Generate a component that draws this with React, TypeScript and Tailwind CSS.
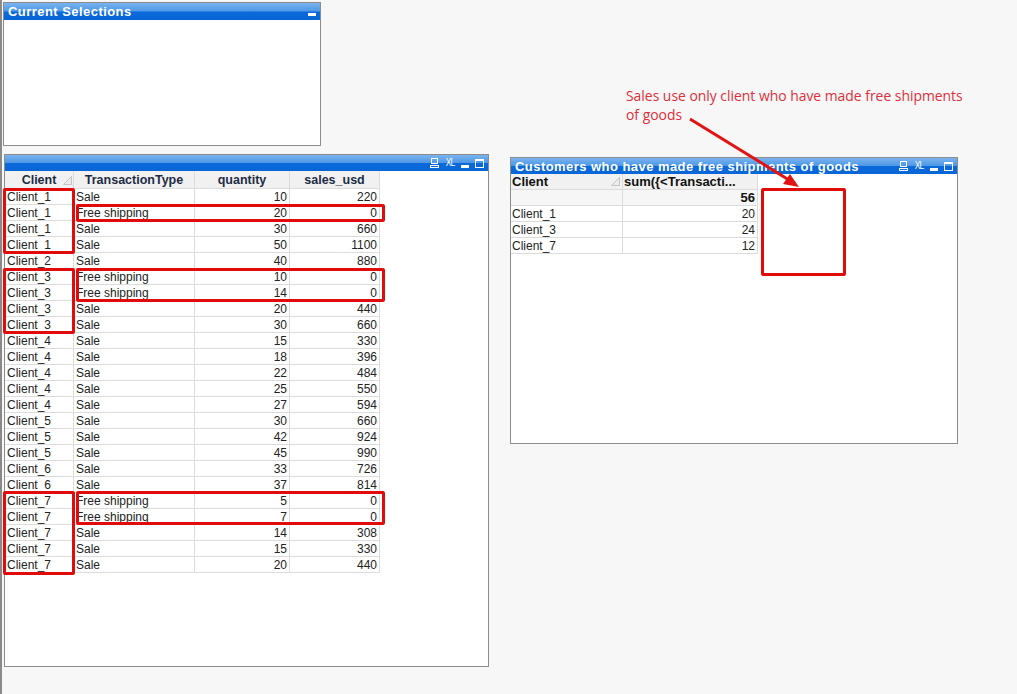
import React from 'react';

type Row = [string, string, number, number];

const salesRows: Row[] = [
  ['Client_1', 'Sale', 10, 220],
  ['Client_1', 'Free shipping', 20, 0],
  ['Client_1', 'Sale', 30, 660],
  ['Client_1', 'Sale', 50, 1100],
  ['Client_2', 'Sale', 40, 880],
  ['Client_3', 'Free shipping', 10, 0],
  ['Client_3', 'Free shipping', 14, 0],
  ['Client_3', 'Sale', 20, 440],
  ['Client_3', 'Sale', 30, 660],
  ['Client_4', 'Sale', 15, 330],
  ['Client_4', 'Sale', 18, 396],
  ['Client_4', 'Sale', 22, 484],
  ['Client_4', 'Sale', 25, 550],
  ['Client_4', 'Sale', 27, 594],
  ['Client_5', 'Sale', 30, 660],
  ['Client_5', 'Sale', 42, 924],
  ['Client_5', 'Sale', 45, 990],
  ['Client_6', 'Sale', 33, 726],
  ['Client_6', 'Sale', 37, 814],
  ['Client_7', 'Free shipping', 5, 0],
  ['Client_7', 'Free shipping', 7, 0],
  ['Client_7', 'Sale', 14, 308],
  ['Client_7', 'Sale', 15, 330],
  ['Client_7', 'Sale', 20, 440],
];

const freeShipping: [string, number][] = [
  ['Client_1', 20],
  ['Client_3', 24],
  ['Client_7', 12],
];

const font = { fontFamily: '"Liberation Sans", Arial, sans-serif' };

// glossy blue caption bar
const captionBg =
  'bg-[linear-gradient(#7ab4ef_0%,#4f98e6_48%,#0b69d9_52%,#0a66d6_100%)]';

function SortMark() {
  return (
    <svg width="9" height="9" viewBox="0 0 9 9" className="shrink-0">
      <polygon points="0.5,8.5 8.5,8.5 8.5,0.5" fill="#ececec" stroke="#c4c4c4" strokeWidth="1" />
    </svg>
  );
}

function CaptionIcons({ full }: { full: boolean }) {
  return (
    <div className="flex items-center gap-[6px] pr-[4px]">
      {full && (
        <>
          <svg width="9" height="10" viewBox="0 0 9 10">
            <rect x="1.5" y="0.5" width="6" height="5" fill="none" stroke="#fff" strokeWidth="1" />
            <rect x="0" y="7" width="9" height="1" fill="#fff" />
            <rect x="0" y="9" width="9" height="1" fill="#fff" />
            <rect x="0" y="7" width="1" height="3" fill="#fff" />
            <rect x="8" y="7" width="1" height="3" fill="#fff" />
          </svg>
          <span className="text-[10px] leading-none text-white tracking-[-1px] scale-x-[0.85]">XL</span>
        </>
      )}
      <div className="w-[8px] h-[3px] bg-white mt-[6px]" />
      {full && (
        <div className="w-[9px] h-[9px] border border-white border-t-[2px]" />
      )}
    </div>
  );
}

function Caption({ title, full, h }: { title?: string; full: boolean; h: string }) {
  return (
    <div className={`${h} ${captionBg} flex items-center justify-between shrink-0`}>
      <span className="pl-[4px] text-white text-[13px] font-bold leading-none whitespace-nowrap tracking-[0.45px]">
        {title}
      </span>
      <CaptionIcons full={full} />
    </div>
  );
}

function RedBox({ className }: { className: string }) {
  return <div className={`absolute border-[3px] border-[#e10b0b] rounded-[2px] ${className}`} />;
}

export default function App() {
  return (
    <div
      className="relative w-[1017px] h-[694px] bg-[#f7f7f7] overflow-hidden border-l-2 border-[#8a8a8a] text-[#222]"
      style={font}
    >
      {/* Current Selections */}
      <div className="absolute left-[1px] top-[2px] w-[318px] h-[144px] bg-white border border-[#8c8c8c] flex flex-col">
        <Caption title="Current Selections" full={false} h="h-[17px]" />
      </div>

      {/* Main straight table */}
      <div className="absolute left-[2px] top-[154px] w-[485px] h-[513px] bg-white border border-[#8c8c8c] flex flex-col">
        <Caption full h="h-[16px]" />
        <div className="grid grid-cols-[69px_121px_95px_90px] w-[375px] text-[12px] leading-[16px]">
          <div className="h-[18px] bg-[#f1f1f1] border-r border-b border-[#dcdcdc] flex items-center justify-center relative font-bold text-[12.5px] text-[#1d2c45]">
            Client
            <div className="absolute right-[1px] top-[5px]">
              <SortMark />
            </div>
          </div>
          <div className="h-[18px] bg-[#f1f1f1] border-r border-b border-[#dcdcdc] flex items-center justify-center font-bold text-[12.5px] text-[#1d2c45]">
            TransactionType
          </div>
          <div className="h-[18px] bg-[#f1f1f1] border-r border-b border-[#dcdcdc] flex items-center justify-center font-bold text-[12.5px] text-[#1d2c45]">
            quantity
          </div>
          <div className="h-[18px] bg-[#f1f1f1] border-r border-b border-[#dcdcdc] flex items-center justify-center font-bold text-[12.5px] text-[#1d2c45]">
            sales_usd
          </div>
          {salesRows.map((r, i) => (
            <React.Fragment key={i}>
              <div className="h-[16px] px-[2px] border-r border-b border-[#dcdcdc] whitespace-nowrap">{r[0]}</div>
              <div className="h-[16px] px-[2px] border-r border-b border-[#dcdcdc] whitespace-nowrap">{r[1]}</div>
              <div className="h-[16px] px-[2px] border-r border-b border-[#dcdcdc] text-right">{r[2]}</div>
              <div className="h-[16px] px-[2px] border-r border-b border-[#dcdcdc] text-right">{r[3]}</div>
            </React.Fragment>
          ))}
        </div>
      </div>

      {/* Customers who have made free shipments of goods */}
      <div className="absolute left-[508px] top-[157px] w-[448px] h-[287px] bg-white border border-[#8c8c8c] flex flex-col">
        <Caption title="Customers who have made free shipments of goods" full h="h-[16px]" />
        <div className="grid grid-cols-[112px_135px] w-[247px] text-[12px] leading-[16px]">
          <div className="h-[16px] bg-[#f1f1f1] border-r border-b border-[#dcdcdc] flex items-center justify-between pl-[1px] pr-[2px] font-bold text-[13px] text-[#111]">
            Client
            <SortMark />
          </div>
          <div className="h-[16px] bg-[#f1f1f1] border-r border-b border-[#dcdcdc] flex items-center pl-[1px] font-bold text-[13px] text-[#111] whitespace-nowrap">
            {'sum({<Transacti...'}
          </div>
          <div className="h-[16px] bg-[#f6f6f6] border-r border-b border-[#dcdcdc]" />
          <div className="h-[16px] bg-[#f6f6f6] border-r border-b border-[#dcdcdc] text-right pr-[2px] font-bold text-[13px] text-[#111]">
            56
          </div>
          {freeShipping.map(([c, q]) => (
            <React.Fragment key={c}>
              <div className="h-[16px] px-[1px] border-r border-b border-[#dcdcdc]">{c}</div>
              <div className="h-[16px] pr-[2px] border-r border-b border-[#dcdcdc] text-right">{q}</div>
            </React.Fragment>
          ))}
        </div>
      </div>

      {/* annotation */}
      <div
        className="absolute left-[624px] top-[86px] text-[13.9px] leading-[19px] text-[#de2f3a] whitespace-nowrap"
        style={{ fontFamily: '"Open Sans", "Liberation Sans", sans-serif' }}
      >
        Sales use only client who have made free shipments
        <br />
        of goods
      </div>
      <svg className="absolute left-0 top-0 pointer-events-none" width="1017" height="694">
        <line x1="688" y1="119" x2="787" y2="180" stroke="#e01414" strokeWidth="3" />
        <polygon points="797,187 781,184 788,174" fill="#e01414" />
      </svg>

      {/* highlight boxes */}
      <RedBox className="left-[1px] top-[188px] w-[72px] h-[66px]" />
      <RedBox className="left-[74px] top-[204px] w-[309px] h-[18px]" />
      <RedBox className="left-[1px] top-[268px] w-[72px] h-[66px]" />
      <RedBox className="left-[74px] top-[268px] w-[309px] h-[34px]" />
      <RedBox className="left-[1px] top-[491px] w-[72px] h-[84px]" />
      <RedBox className="left-[74px] top-[491px] w-[309px] h-[34px]" />
      <RedBox className="left-[759px] top-[188px] w-[85px] h-[88px]" />
    </div>
  );
}
